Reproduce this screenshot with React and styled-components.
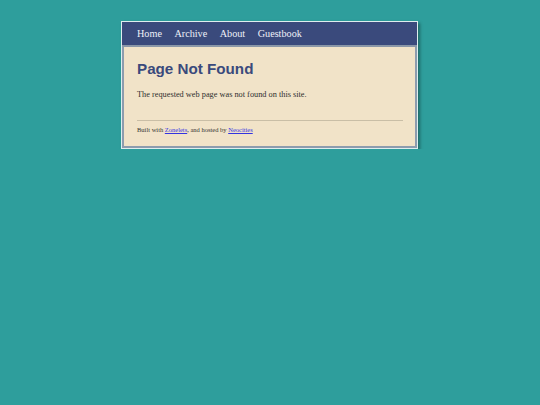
import React from 'react';
import styled, { createGlobalStyle } from 'styled-components';

const Global = createGlobalStyle`
  html, body {
    margin: 0;
    padding: 0;
    background: #2e9e9c;
  }
  body {
    padding: 21px 1px 0 0;
  }
`;

const Page = styled.div`
  width: 291px;
  margin: 0 auto;
  background: #f1e3c8;
  border: 1px solid #dfeeee;
  box-shadow: inset 2px 0 0 #8d9cae, inset -2px 0 0 #8d9cae, inset 0 -2px 0 #8d9cae,
    2px 2px 3px rgba(0, 0, 0, 0.35);
  padding: 0 2px 2px;
`;

const Nav = styled.nav`
  display: flex;
  gap: 12.5px;
  align-items: center;
  height: 23px;
  margin: 0 -2px;
  padding: 0 14px 0 15px;
  background: #3a4a7c;
  border-bottom: 2px solid #8a97a8;
`;

const NavLink = styled.a`
  font-family: "Liberation Serif", "Times New Roman", serif;
  font-size: 10.2px;
  color: #eef0f8;
  text-decoration: none;
`;

const Main = styled.main`
  padding: 13px 12px 13px 13px;
`;

const Title = styled.h1`
  margin: 0;
  font-family: "Liberation Sans", Arial, sans-serif;
  font-size: 15.2px;
  font-weight: bold;
  color: #3a4a7c;
  line-height: 18px;
`;

const Text = styled.p`
  margin: 12px 0 0;
  font-family: "Liberation Serif", "Times New Roman", serif;
  font-size: 8.3px;
  color: #2f2f2f;
`;

const Rule = styled.hr`
  margin: 21px 0 0;
  border: none;
  border-top: 1px solid #c9bea6;
`;

const Footer = styled.footer`
  margin-top: 5px;
  font-family: "Liberation Serif", "Times New Roman", serif;
  font-size: 6.5px;
  color: #333;

  a {
    color: #3434e0;
  }
`;

const App = () => (
  <>
    <Global />
    <Page>
      <Nav>
        <NavLink href="#">Home</NavLink>
        <NavLink href="#">Archive</NavLink>
        <NavLink href="#">About</NavLink>
        <NavLink href="#">Guestbook</NavLink>
      </Nav>
      <Main>
        <Title>Page Not Found</Title>
        <Text>The requested web page was not found on this site.</Text>
        <Rule />
        <Footer>
          Built with <a href="#">Zonelets</a>, and hosted by <a href="#">Neocities</a>
        </Footer>
      </Main>
    </Page>
  </>
);

export default App;
